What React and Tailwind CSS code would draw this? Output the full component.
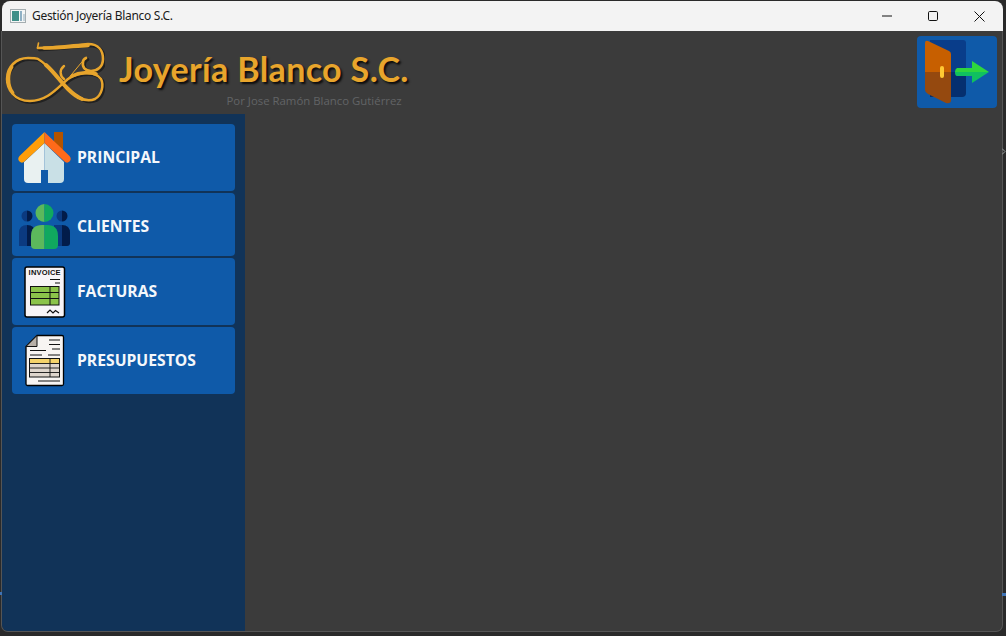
import React from "react";

const BLUE = "#0f5aa9";

function Logo() {
  const top = "M38 47 C55 47 75 44 88 43 C99 43 103 50 103 58 C103 66 97 70 91 70 C85 70 82 66 83 61 C83 59 84 58 86 57";
  const loop = "M38 58 C50 65 58 78 68 88 C76 96 86 102 95 98 C102 94 104 84 101 78 C95 70 80 70 68 78 C58 86 48 100 30 100 C14 100 7 88 7 78 C7 66 16 57 28 57 C32 57 36 57 38 58";
  return (
    <svg width="103" height="80" viewBox="2 30 103 80" className="shrink-0" fill="none" strokeLinecap="round" strokeLinejoin="round">
      <g transform="translate(1.5 1.5)" opacity="0.6" stroke="#111">
        <path d={top} strokeWidth="3.4" />
        <path d={loop} strokeWidth="3" />
      </g>
      <g stroke="#e8a52c">
        <path d={top} strokeWidth="2.6" />
        <path d="M44 47 C60 47 76 45 88 44.5" strokeWidth="3.6" />
        <path d="M38.5 42 L37.5 47" strokeWidth="1.6" />
        <path d={loop} strokeWidth="2.5" />
        <path d="M46 64 C54 71 60 80 68 88 C72 92 77 96 82 98" strokeWidth="4" />
        <path d="M12 66 C8 72 7 84 13 92" strokeWidth="3" />
        <path d="M72 75 C80 71 90 71 96 73" strokeWidth="3.6" />
        <path d="M64 65 C59 69 60 75 64 78" strokeWidth="2.4" />
        <path d="M86 56 L67 79" strokeWidth="1" />
      </g>
    </svg>
  );
}

function House() {
  return (
    <svg width="56" height="57" viewBox="16 129 56 57" className="shrink-0">
      <rect x="54" y="132" width="9" height="18" fill="#b35300" />
      <path d="M44.5 143 L24 162 V179 Q24 183 28 183 H44.5 Z" fill="#e9f1f1" />
      <path d="M44.5 143 L64 162 V179 Q64 183 60 183 H44.5 Z" fill="#c9e0e6" />
      <path d="M44.5 132 L19.5 156 Q17 159 19.5 161.5 Q22 164 25 161 L44.5 143 Z" fill="#ff9d0a" />
      <path d="M44.5 132 L69.5 156 Q72 159 69.5 161.5 Q67 164 64 161 L44.5 143 Z" fill="#ff6a1a" />
      <rect x="41" y="170" width="7" height="13" fill={BLUE} />
    </svg>
  );
}

function Clients() {
  return (
    <svg width="56" height="50" viewBox="16 202 56 50" className="mt-px shrink-0">
      <path d="M27 210.5 a5.5 5.5 0 0 0 0 11 Z" fill="#0b3a80" />
      <path d="M27 210.5 a5.5 5.5 0 0 1 0 11 Z" fill="#021c4a" />
      <path d="M62 210.5 a5.5 5.5 0 0 0 0 11 Z" fill="#0b3a80" />
      <path d="M62 210.5 a5.5 5.5 0 0 1 0 11 Z" fill="#021c4a" />
      <path d="M19 246 V233 Q19 225 27 225 V246 Z" fill="#0b3a80" />
      <path d="M27 225 Q35 225 35 233 V246 H27 Z" fill="#021c4a" />
      <path d="M54 225 H62 V246 H54 Z" fill="#0b3a80" />
      <path d="M62 225 Q70 225 70 233 V243 Q70 246 67 246 H62 Z" fill="#021c4a" />
      <path d="M44.5 204 a9 9 0 0 0 0 18 Z" fill="#5cb85c" />
      <path d="M44.5 204 a9 9 0 0 1 0 18 Z" fill="#10a85f" />
      <path d="M44.5 225 H42 Q31 225 31 236 V245 Q31 249 35 249 H44.5 Z" fill="#5cb85c" />
      <path d="M44.5 225 H47 Q58 225 58 236 V245 Q58 249 54 249 H44.5 Z" fill="#10a85f" />
    </svg>
  );
}

function Invoice() {
  return (
    <svg width="56" height="55" viewBox="16 264 56 55" className="shrink-0">
      <rect x="25" y="267" width="39.5" height="50" rx="2" fill="#f7f4f7" stroke="#000" strokeWidth="1.5" />
      <text x="44.6" y="275" textAnchor="middle" fontSize="7.5" fontWeight="700" fontFamily="'Liberation Sans', sans-serif" fill="#111" textLength="32" lengthAdjust="spacing">INVOICE</text>
      <path d="M50 279.5 H60 M55 283 H60" stroke="#111" strokeWidth="1" />
      <rect x="30.5" y="286.5" width="28.5" height="18.5" fill="#8bc34a" stroke="#111" strokeWidth="1" />
      <path d="M31 292.5 H59 M31 298.5 H59 M50 287 V305" stroke="#111" strokeWidth="1" />
      <path d="M47 313 L50 310 L53 313 L55.5 310.5 L59 313" fill="none" stroke="#111" strokeWidth="1.2" />
    </svg>
  );
}

function Budget() {
  return (
    <svg width="56" height="55" viewBox="16 333 56 55" className="shrink-0">
      <path d="M37 335.5 H62 Q63.5 335.5 63.5 337 V384 Q63.5 385.5 62 385.5 H27.5 Q26 385.5 26 384 V346.5 Z" fill="#f7f4f2" stroke="#000" strokeWidth="1.3" />
      <path d="M26 346.5 L37 335.5 V346.5 Z" fill="#b8b0a8" stroke="#111" strokeWidth="1" />
      <path d="M49 340 H60 M49 344.5 H60 M52 349 H60 M30 350.5 H46 M30 355 H42 M48 355 H60 M38 381 H60" stroke="#111" strokeWidth="1.1" />
      <rect x="29.5" y="358.5" width="30" height="18.5" fill="#ded5cc" stroke="#111" strokeWidth="1" />
      <rect x="30" y="359" width="29" height="4.5" fill="#f5d36b" />
      <path d="M30 363.5 H59 M30 368 H59 M30 372.5 H59 M50 359 V377" stroke="#111" strokeWidth="0.9" />
    </svg>
  );
}

function ExitIcon() {
  return (
    <svg width="80" height="72" viewBox="917 36 80 72">
      <path d="M930 40 H963 Q966 40 966 43 V72 H930 Z" fill="#093d8a" />
      <path d="M930 72 H966 V93 Q966 97 962 97 H930 Z" fill="#052f6f" />
      <path d="M925 43 Q925 40 928 41 L949 51 Q951 52 951 54 V72 H925 Z" fill="#c75f00" />
      <path d="M925 72 H951 V100 Q951 104 946 103 L928 94 Q925 92 925 90 Z" fill="#95490f" />
      <rect x="940" y="66" width="4" height="12" rx="2" fill="#ffc933" />
      <path d="M957 68 H972 V61 L989 72 H955 Q955 69 957 68 Z" fill="#2ed63e" />
      <path d="M955 72 Q955 76 957 76 H972 V83 L989 72 Z" fill="#10c060" />
    </svg>
  );
}

function NavButton({ icon, label, cls }) {
  return (
    <div className={`flex items-center gap-[5px] rounded-[4px] bg-[#0f5aa9] pl-[4px] ${cls}`}>
      {icon}
      <span className="text-[15.7px] font-bold text-[#f4f7fb] font-['Open_Sans',sans-serif]">{label}</span>
    </div>
  );
}

export default function App() {
  return (
    <div className="relative flex h-[636px] w-[1006px] flex-col overflow-hidden bg-[#2a2a2a] pb-[4px] pl-px pr-[3px] pt-px font-['Open_Sans',sans-serif]">
      <div className="ml-px flex h-[30px] shrink-0 items-center rounded-t-[8px] bg-[#f3f3f3] pl-[8px]">
        <svg width="16" height="14" viewBox="0 0 16 14" className="shrink-0">
          <rect x="0.5" y="0.5" width="15" height="13" fill="#f4f6f6" stroke="#a4adb0" />
          <rect x="2" y="2" width="7" height="10" fill="#3f8f88" />
          <rect x="10" y="2" width="2" height="10" fill="#8fb0c4" />
          <rect x="13" y="5" width="2" height="7" fill="#c4d2da" />
        </svg>
        <span className="ml-[6px] text-[12px] leading-none text-[#1a1a1a] font-['Noto_Sans',sans-serif] tracking-[-0.3px]">Gestión Joyería Blanco S.C.</span>
        <div className="ml-auto flex items-center">
          <div className="flex h-[30px] w-[46px] items-center justify-center">
            <svg width="10" height="10" viewBox="0 0 10 10"><path d="M0 5 H10" stroke="#111" strokeWidth="1" /></svg>
          </div>
          <div className="flex h-[30px] w-[46px] items-center justify-center">
            <svg width="10" height="10" viewBox="0 0 10 10"><rect x="0.5" y="0.5" width="9" height="9" rx="1.2" fill="none" stroke="#111" strokeWidth="1" /></svg>
          </div>
          <div className="flex h-[30px] w-[46px] items-center justify-center">
            <svg width="11" height="11" viewBox="0 0 11 11"><path d="M0.5 0.5 L10.5 10.5 M10.5 0.5 L0.5 10.5" stroke="#111" strokeWidth="1" /></svg>
          </div>
          <div className="w-[1px]" />
        </div>
      </div>

      <div className="flex min-h-0 flex-1 flex-col overflow-hidden rounded-b-[7px] border-x border-b border-[#555555] bg-[#3b3b3b]">
        <header className="flex h-[83px] shrink-0 items-start justify-between pr-[5px]">
          <div className="flex items-start">
            <Logo />
            <div className="ml-[14px] flex flex-col items-end">
              <span className="mt-[15px] whitespace-nowrap text-[34px] font-bold leading-[46px] text-[#e8a52c] font-['Lato',sans-serif] tracking-[0.36px] [text-shadow:2px_2px_2px_#0d0d0d]">Joyería Blanco S.C.</span>
              <span className="mr-[7px] mt-[2px] whitespace-nowrap text-[11.4px] leading-[14px] text-[#626466] font-['Open_Sans',sans-serif]">Por Jose Ramón Blanco Gutiérrez</span>
            </div>
          </div>
          <div className="mt-[5px] h-[72px] w-[80px] overflow-hidden rounded-[4px] bg-[#0f5aa9]">
            <ExitIcon />
          </div>
        </header>

        <div className="flex min-h-0 flex-1">
          <aside className="flex w-[243px] shrink-0 flex-col gap-[2px] bg-[#113358] px-[10px] pt-[10px]">
            <NavButton icon={<House />} label="PRINCIPAL" cls="h-[67px]" />
            <NavButton icon={<Clients />} label="CLIENTES" cls="h-[63px] pt-[4px]" />
            <NavButton icon={<Invoice />} label="FACTURAS" cls="h-[67px]" />
            <NavButton icon={<Budget />} label="PRESUPUESTOS" cls="h-[67px]" />
          </aside>
          <main className="flex-1" />
        </div>
      </div>

      <span className="absolute left-0 top-[592px] h-[3px] w-[2px] bg-[#3f73b5]" />
      <span className="absolute right-0 top-[593px] h-[3px] w-[4px] bg-[#3f73b5]" />
      <svg width="4" height="7" viewBox="0 0 4 7" className="absolute right-0 top-[148px]">
        <path d="M0 0.5 L3 3.5 L0 6.5" fill="none" stroke="#9aa0a0" strokeWidth="1" />
      </svg>
    </div>
  );
}
